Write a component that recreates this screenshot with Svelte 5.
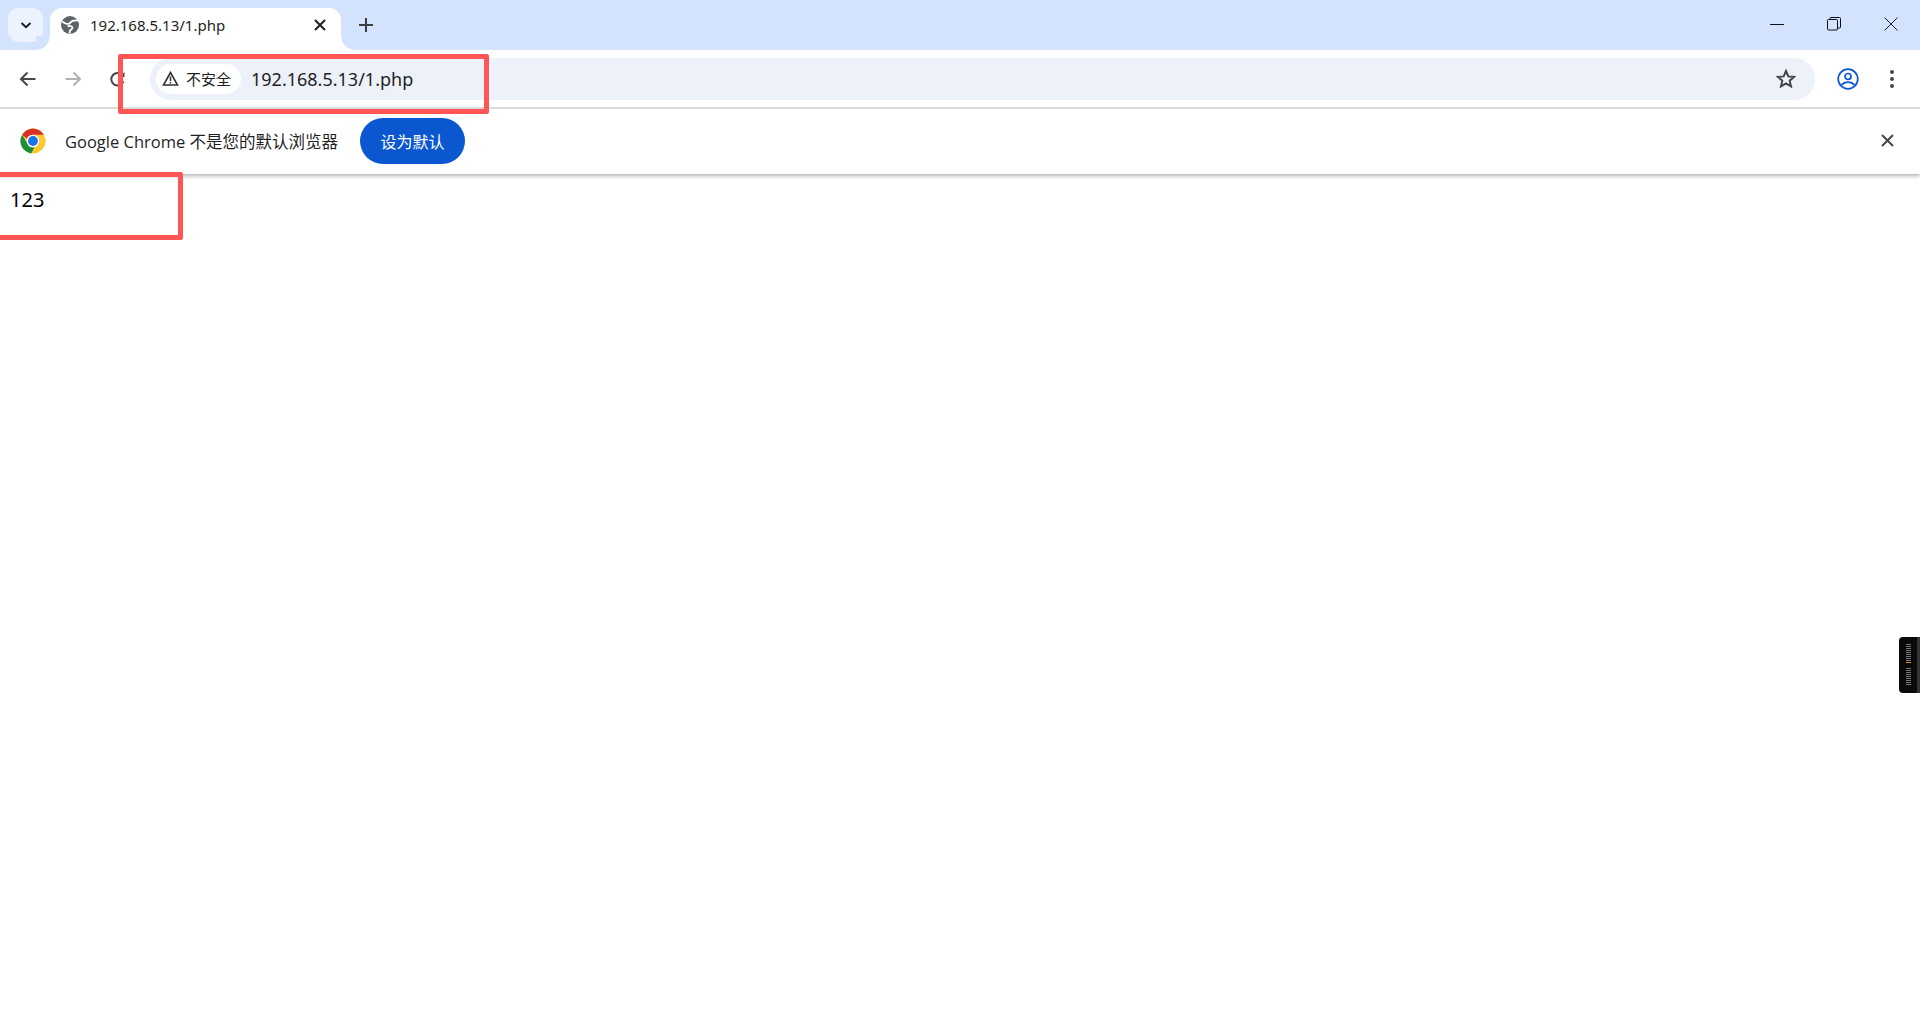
<script>
  const pageUrl = '192.168.5.13/1.php';
</script>

<div class="browser">
  <header class="tabstrip">
    <button class="tab-search" aria-label="搜索标签页">
      <svg width="16" height="16" viewBox="0 0 16 16"><path d="M3.5 6 8 10.2 12.5 6" fill="none" stroke="#1f1f1f" stroke-width="2"/></svg>
    </button>
    <div class="tab">
      <svg class="globe" width="18" height="18" viewBox="0 0 18 18">
        <circle cx="9" cy="9" r="9" fill="#5f6368"/>
        <path d="M17.500 4.500C14 4.500 11 4 9.500 6.500 8.500 8.500 6 8 4.500 7.500 3 7 2 6 1.200 5.500" fill="none" stroke="#fff" stroke-width="1.800"/>
        <path d="M6.500 10.500c2-1 4.500-.5 5 1 .3 1.500-1.500 2-2.500 3l-.5 3" fill="none" stroke="#fff" stroke-width="1.800"/>
      </svg>
      <span class="tab-title">{pageUrl}</span>
      <svg class="tab-close" width="12" height="12" viewBox="0 0 12 12"><path d="M1 1l10 10M11 1 1 11" stroke="#1f1f1f" stroke-width="2"/></svg>
    </div>
    <svg class="new-tab" width="14" height="14" viewBox="0 0 14 14"><path d="M7 0v14M0 7h14" stroke="#3c4043" stroke-width="2"/></svg>
    <div class="window-controls">
      <svg width="14" height="14" viewBox="0 0 14 14"><path d="M0 7.500h14" stroke="#111" stroke-width="1"/></svg>
      <svg width="14" height="14" viewBox="0 0 14 14" fill="none" stroke="#111"><rect x=".5" y="2.500" width="10" height="10.500" rx="1"/><path d="M3 2.500V1.500q0-1 1-1h8.500q1 0 1 1V10q0 1-1 1h-2"/></svg>
      <svg width="14" height="14" viewBox="0 0 14 14"><path d="M.5.500l13 13M13.500.500l-13 13" stroke="#222" stroke-width="1"/></svg>
    </div>
  </header>

  <nav class="toolbar">
    <svg class="nav-back" width="18" height="16" viewBox="0 0 18 16"><path d="M16.500 8H2M8.500 1.500 2 8l6.500 6.500" fill="none" stroke="#474747" stroke-width="2"/></svg>
    <svg class="nav-forward" width="18" height="16" viewBox="0 0 18 16"><path d="M1.500 8H16M9.500 1.500 16 8l-6.500 6.500" fill="none" stroke="#b0b2b5" stroke-width="2"/></svg>
    <svg class="nav-reload" width="16" height="16" viewBox="0 0 16 16"><path d="M13.500 10.500a6.300 6.300 0 1 1-.8-6" fill="none" stroke="#474747" stroke-width="2"/><path d="M14.500 1v5h-5z" fill="#474747"/></svg>
    <div class="omnibox">
      <div class="security-chip">
        <svg width="17" height="15" viewBox="0 0 17 15"><path d="M8.500 1.500 1.500 14h14z" fill="none" stroke="#333" stroke-width="1.600"/><path d="M8.500 5.500v4.500M8.500 11v1.500" stroke="#333" stroke-width="1.500"/></svg>
        <span>不安全</span>
      </div>
      <span class="url">{pageUrl}</span>
      <svg class="star" width="20" height="19" viewBox="0 0 20 19"><path d="M10 2l2.300 5.400 5.700.5-4.300 3.800 1.300 5.700L10 14.400 5 17.400l1.300-5.700L2 7.900l5.700-.5z" fill="none" stroke="#474747" stroke-width="2"/></svg>
    </div>
    <svg class="profile" width="22" height="22" viewBox="0 0 22 22" fill="none" stroke="#0b57d0" stroke-width="1.700"><circle cx="11" cy="11" r="9.800"/><circle cx="11" cy="8.500" r="3"/><path d="M4.500 17q2.500-2.800 6.500-2.800t6.500 2.800"/></svg>
    <svg class="menu" width="4" height="18" viewBox="0 0 4 18" fill="#474747"><circle cx="2" cy="2" r="2"/><circle cx="2" cy="9" r="2"/><circle cx="2" cy="16" r="2"/></svg>
  </nav>

  <section class="infobar">
    <svg class="chrome-logo" width="26" height="26" viewBox="0 0 26 26">
      <circle cx="13" cy="13" r="12.500" fill="#fcc934"/>
      <path d="M2.200 6.700A12.500 12.500 0 0 1 23.800 6.700H13a6.500 6.500 0 0 0-6 4z" fill="#d93025"/>
      <path d="M2.200 6.700 7.600 16.200a6.300 6.300 0 0 0 6.900 3.100L11.100 25.400A12.500 12.500 0 0 1 2.200 6.700z" fill="#1e8e3e"/>
      <circle cx="13" cy="13" r="6.300" fill="#fff"/>
      <circle cx="13" cy="13" r="4.900" fill="#1a73e8"/>
    </svg>
    <span class="info-text">Google Chrome 不是您的默认浏览器</span>
    <button class="set-default">设为默认</button>
    <svg class="info-close" width="13" height="13" viewBox="0 0 13 13"><path d="M1 1l11 11M12 1 1 12" stroke="#474747" stroke-width="2"/></svg>
  </section>

  <main class="page">123</main>

  <div class="note note-url"></div>
  <div class="note note-body"></div>

  <div class="side-widget">
    <div class="ticks">
      {#each Array(19) as _, i}
        <i class:active={i === 9}></i>
      {/each}
    </div>
  </div>
</div>

<style>
  :global(body) {
    margin: 0;
    background: #fff;
  }

  .browser {
    position: relative;
    height: 1025px;
    overflow: hidden;
    font-family: "Noto Sans", "Noto Sans CJK SC", sans-serif;
    color: #1f1f1f;
  }

  .tabstrip {
    height: 50px;
    background: #d3e3fd;
    display: flex;
    align-items: flex-end;
    padding-left: 8px;
    box-sizing: border-box;
  }

  .tab-search {
    width: 35px;
    height: 34px;
    margin-bottom: 8px;
    padding: 0;
    border: none;
    border-radius: 10px;
    background: #ecf2fe;
    display: flex;
    align-items: center;
    justify-content: center;
  }

  .tab {
    position: relative;
    z-index: 1;
    width: 291px;
    height: 42px;
    margin-left: 7px;
    box-sizing: border-box;
    padding: 0 15px 8px 11px;
    background: #fff;
    border-radius: 12px 12px 0 0;
    display: flex;
    align-items: center;
  }

  .tab::before,
  .tab::after {
    content: "";
    position: absolute;
    bottom: 0;
    width: 14px;
    height: 14px;
    background: radial-gradient(circle at 100% 0, #d3e3fd 13.500px, #fff 14px);
  }

  .tab::before {
    left: -14px;
    transform: scaleX(-1);
  }

  .tab::after {
    right: -14px;
  }

  .tab-title {
    margin-left: 11px;
    flex: 1;
    font-size: 15px;
    line-height: 20px;
  }

  .new-tab {
    margin: 0 0 18px 18px;
  }

  .window-controls {
    margin-left: auto;
    height: 50px;
    display: flex;
    align-items: center;
    gap: 43px;
    padding: 0 22px 2px 0;
    box-sizing: border-box;
  }

  .toolbar {
    height: 59px;
    background: #fff;
    border-radius: 16px 16px 0 0;
    border-bottom: 2px solid #e0e0e0;
    box-sizing: border-box;
    display: flex;
    align-items: center;
    padding-left: 19px;
  }

  .nav-forward {
    margin-left: 27px;
  }

  .nav-reload {
    margin-left: 28px;
  }

  .omnibox {
    width: 1665px;
    height: 42px;
    margin-left: 24px;
    box-sizing: border-box;
    background: #ecf1fa;
    border-radius: 21px;
    display: flex;
    align-items: center;
    padding: 0 19px 0 6px;
  }

  .security-chip {
    width: 85px;
    height: 30px;
    box-sizing: border-box;
    padding-left: 6px;
    background: #fff;
    border-radius: 15px;
    display: flex;
    align-items: center;
    gap: 7px;
    font-size: 15px;
  }

  .url {
    margin-left: 10px;
    flex: 1;
    font-size: 18px;
    color: #1f1f1f;
  }

  .profile {
    margin-left: 22px;
  }

  .menu {
    margin-left: 31px;
  }

  .infobar {
    height: 65px;
    box-sizing: border-box;
    background: #fff;
    box-shadow: 0 2px 4px rgba(0, 0, 0, 0.3);
    position: relative;
    display: flex;
    align-items: center;
    padding: 0 26px 2px 20px;
  }

  .info-text {
    margin-left: 19px;
    font-family: "Open Sans", "Noto Sans CJK SC", sans-serif;
    font-size: 16.500px;
    white-space: nowrap;
  }

  .set-default {
    width: 105px;
    height: 46px;
    margin-left: 22px;
    border: none;
    border-radius: 23px;
    background: #0b57d0;
    color: #fff;
    font-family: inherit;
    font-size: 16px;
    padding: 0;
  }

  .info-close {
    margin-left: auto;
  }

  .page {
    padding: 12px 10px;
    font-size: 20px;
    line-height: 28px;
    color: #000;
  }

  /* annotation boxes drawn over the screenshot */
  .note {
    position: absolute;
    box-sizing: border-box;
    border: 5px solid #ff5555;
    border-radius: 2px;
  }

  .note-url {
    left: 118px;
    top: 54px;
    width: 371px;
    height: 60px;
  }

  .note-body {
    left: -5px;
    top: 172px;
    width: 188px;
    height: 68px;
  }

  .side-widget {
    position: absolute;
    right: 0;
    top: 637px;
    width: 21px;
    height: 56px;
    box-sizing: border-box;
    background: #0a0a0a;
    border-radius: 4px 0 0 4px;
    border-right: 3px solid #333;
  }

  .ticks {
    display: flex;
    flex-direction: column;
    align-items: center;
    gap: 1px;
    padding-top: 7px;
  }

  .ticks i {
    width: 5px;
    height: 1px;
    background: #777;
  }

  .ticks i.active {
    background: #f08c00;
    margin-bottom: 4px;
  }
</style>
